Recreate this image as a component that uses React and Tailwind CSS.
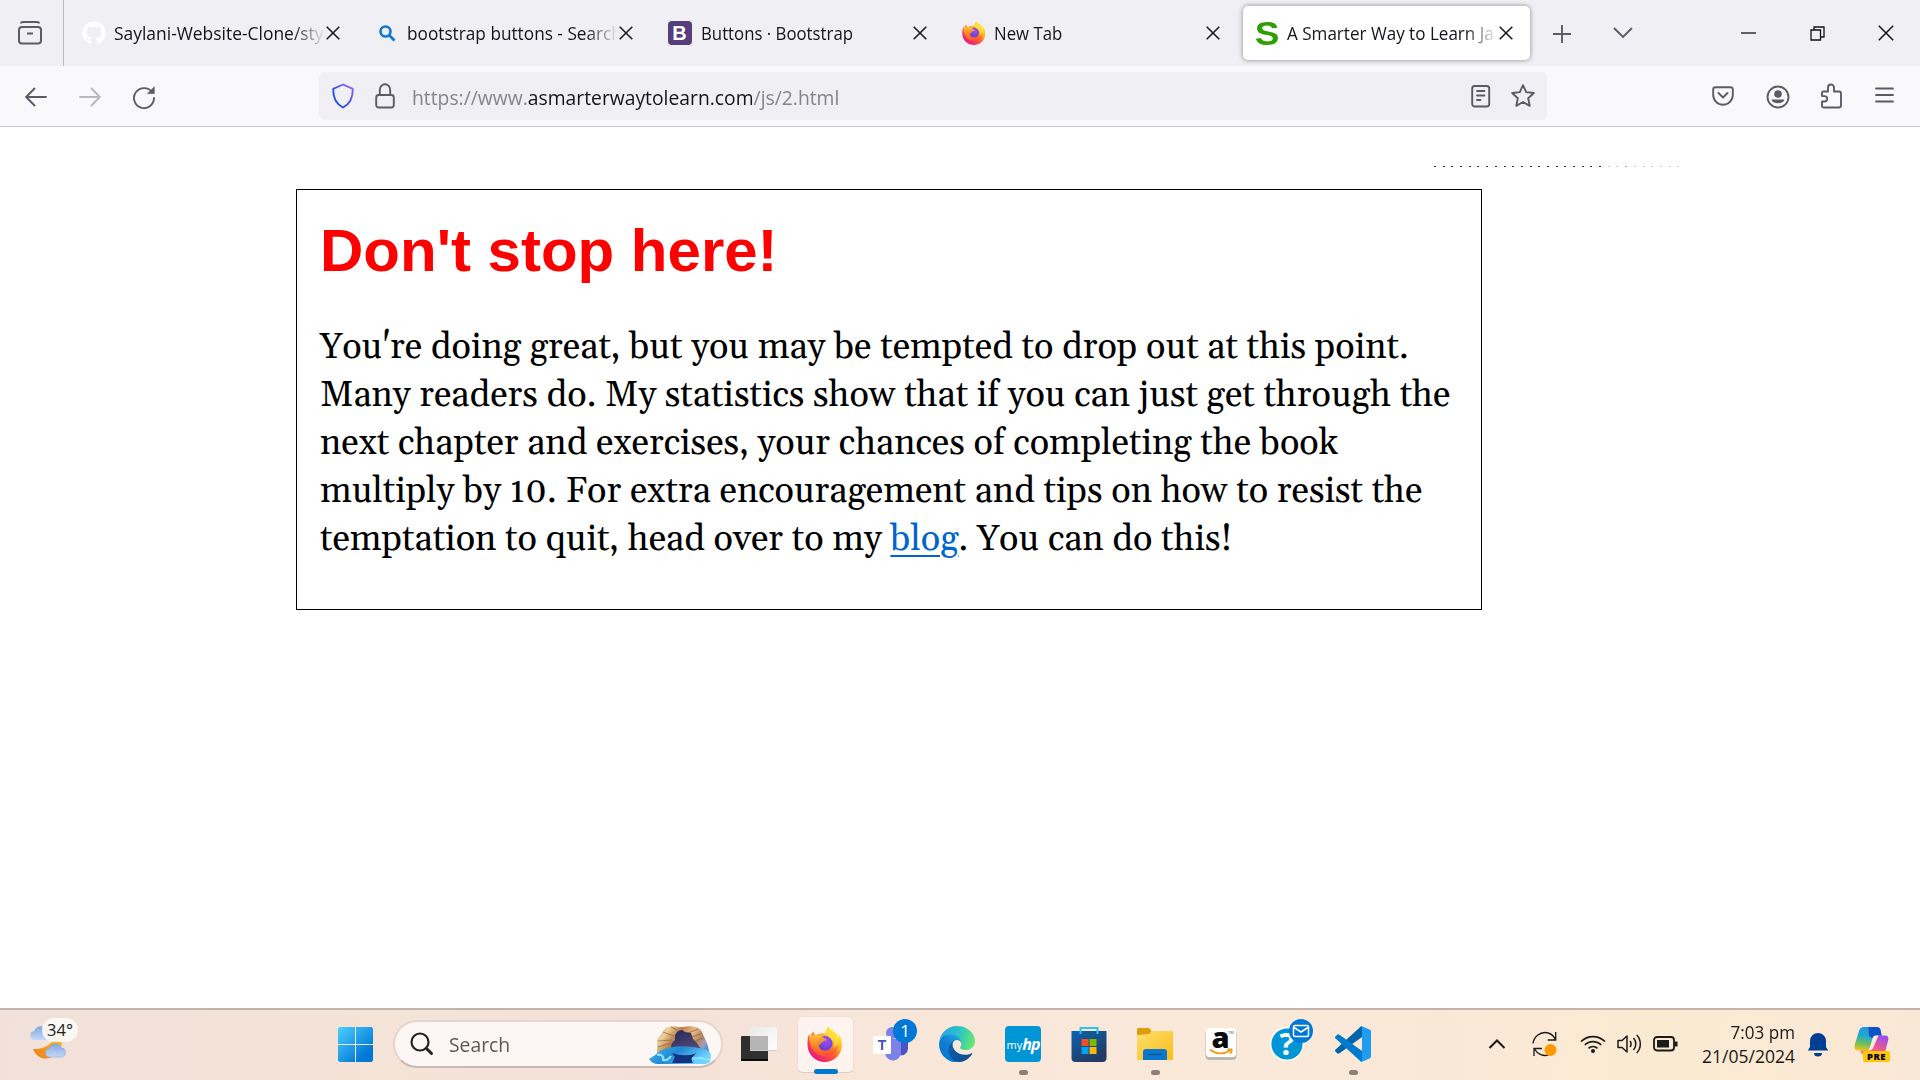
import { FaGithub } from "react-icons/fa";

function Firefox({ id, className }) {
  return (
    <svg viewBox="0 0 36 36" className={className}>
      <defs>
        <linearGradient id={id + "a"} x1="0.85" y1="0.1" x2="0.2" y2="0.95">
          <stop offset="0" stopColor="#fff44f" />
          <stop offset="0.3" stopColor="#ffbd2a" />
          <stop offset="0.6" stopColor="#ff5a36" />
          <stop offset="1" stopColor="#e5108a" />
        </linearGradient>
        <linearGradient id={id + "b"} x1="0.3" y1="0" x2="0.5" y2="1">
          <stop offset="0" stopColor="#ffc93c" />
          <stop offset="0.5" stopColor="#ff8a16" />
          <stop offset="1" stopColor="#ff4a3c" />
        </linearGradient>
        <radialGradient id={id + "c"} cx="0.6" cy="0.35" r="0.7">
          <stop offset="0" stopColor="#a04bf0" />
          <stop offset="1" stopColor="#5a3fd0" />
        </radialGradient>
      </defs>
      <path d="M21.5.5c-2 2-3 4.500-3 7C14 6.500 10 8 8.500 9.500 7.500 8.500 7 7 7 5.500 4.500 7 3.500 9 3 10.500 2.500 9.800 2.200 9 2.200 7.800.6 11.500.5 15 .5 19a17.200 17 0 0 0 34.500 0c0-5-1.500-9-4-11.500.3 1.300.5 2.500.3 4C29.500 5.500 23.500 5 21.500.5z" fill={`url(#${id}a)`} />
      <circle cx="18" cy="17.500" r="7.500" fill={`url(#${id}c)`} />
      <path d="M2 9.500c2.500-1 4.500-.5 6.500 0C12 8.200 15 9.500 17 12.200c2 .2 2.700.8 2.500 1.600-.3 1.200-3.500 1.700-4.200 2.200-.7 2-2.800 2-3.300 3.500.4 4.500 5 6 9 4.800 3.500-1 5.500-4 5.200-7.800-.3-3.500-2-5.500-3.700-6.700 4.500 1 8 5 8 9.700C30.500 26 25 30.500 18.500 30.500 9 30.500 2 22 2 9.500z" fill={`url(#${id}b)`} fillOpacity="0.85" />
      <path d="M21.500.5c-3 3.500-3.500 7.500.5 10.500 4.500 3 6 7 4.500 12 4-3 5.500-7.500 4.800-11.500C29.500 5.500 23.500 5 21.500.5z" fill="#ffe03d" fillOpacity="0.8" />
    </svg>
  );
}

function Edge() {
  return (
    <svg viewBox="0 0 256 256" className="h-9 w-9">
      <defs>
        <linearGradient id="e1" x1="0.2" y1="0.5" x2="1" y2="0.5"><stop offset="0" stopColor="#0c59a4" /><stop offset="1" stopColor="#114a8b" /></linearGradient>
        <linearGradient id="e2" x1="0.8" y1="0.2" x2="0.3" y2="0.9"><stop offset="0" stopColor="#1b9de2" /><stop offset="0.5" stopColor="#127cd0" /><stop offset="1" stopColor="#0078d7" /></linearGradient>
        <linearGradient id="e3" x1="0" y1="0.4" x2="1" y2="0.6"><stop offset="0" stopColor="#2b9fe6" /><stop offset="0.5" stopColor="#2cc3c8" /><stop offset="1" stopColor="#66eb6e" /></linearGradient>
      </defs>
      <path transform="translate(-4.63 -1.92)" fill="url(#e1)" d="M235.680 195.600a93.730 93.730 0 0 1-10.540 4.710 101.870 101.870 0 0 1-35.900 6.460c-47.320 0-88.540-32.550-88.540-74.320A31.480 31.480 0 0 1 117.130 105c-42.800 1.800-53.800 46.400-53.800 72.530 0 73.880 68.090 81.370 82.760 81.370 7.910 0 19.840-2.300 27-4.560l1.310-.44a128.340 128.340 0 0 0 66.600-52.800 4 4 0 0 0-5.320-5.500z" />
      <path transform="translate(-4.63 -1.92)" fill="url(#e2)" d="M110.340 246.340A79.200 79.200 0 0 1 87.600 225a80.720 80.720 0 0 1 29.530-120c3.120-1.470 8.450-4.130 15.540-4a32.350 32.350 0 0 1 25.690 13 31.880 31.880 0 0 1 6.360 18.660c0-.21 24.460-79.600-80-79.600-43.900 0-80 41.660-80 78.210a130.150 130.150 0 0 0 12.110 56 128 128 0 0 0 156.380 67.110 75.550 75.550 0 0 1-62.780-8z" />
      <path fill="url(#e3)" d="M152.330 148.860c-.81 1.050-3.300 2.500-3.300 5.660 0 2.610 1.700 5.120 4.720 7.230 14.380 10 41.490 8.680 41.560 8.680a59.560 59.560 0 0 0 30.270-8.350A61.380 61.380 0 0 0 256 109.200c.26-22.410-8-37.310-11.340-43.910C223.460 23.840 177.720 0 128 0A128 128 0 0 0 0 126.200c.48-36.540 36.800-66.050 80-66.050 3.500 0 23.460.34 42 10.070 16.340 8.580 24.900 18.940 30.850 29.210 6.180 10.670 7.280 24.150 7.280 29.520s-2.740 13.330-7.800 19.910z" />
    </svg>
  );
}

const Cross = ({ s = 14, w = 1.6, c = "#1d1d22" }) => (
  <svg width={s} height={s} viewBox="0 0 14 14" className="shrink-0">
    <path d="M.7.7l12.600 12.600M13.300.7L.7 13.300" stroke={c} strokeWidth={w} fill="none" />
  </svg>
);

const tabs = [
  { t: "Saylani-Website-Clone/sty", c: "scale-x-[0.968]", icon: <FaGithub className="h-6 w-6 text-white" /> },
  {
    t: "bootstrap buttons - Search", c: "scale-x-[0.957]",
    icon: <svg viewBox="0 0 24 24" className="h-6 w-6"><circle cx="10.500" cy="10.500" r="5" fill="none" stroke="#0f78d4" strokeWidth="2.600" /><path d="M14 14l5.500 5.500" stroke="#0f78d4" strokeWidth="2.800" /></svg>,
  },
  {
    t: "Buttons · Bootstrap", c: "scale-x-[0.932]",
    icon: <span className="mr-px -ml-px flex h-6 w-6 items-center justify-center rounded bg-[#563d7c] font-['Liberation_Sans'] text-[20px] leading-none font-bold text-white">B</span>,
  },
  { t: "New Tab", c: "scale-x-[0.932]", icon: <Firefox id="ft" className="h-6 w-6" /> },
  {
    t: "A Smarter Way to Learn Ja", c: "scale-x-[0.948]", active: true,
    icon: <span className="flex h-6 w-6 items-center justify-center font-['Liberation_Sans'] text-[33px] leading-none font-bold text-[#2f9e00]"><span className="scale-x-[1.12]">S</span></span>,
  },
];

function Tab({ tab }) {
  return (
    <div className={"flex h-[54px] w-[287px] shrink-0 items-center rounded-[5px] pl-3 " + (tab.active ? "bg-white shadow-[0_0_5px_rgba(0,0,0,0.45)]" : "")}>
      {tab.icon}
      <div className="ml-2 w-[212px] [mask-image:linear-gradient(to_right,black_178px,transparent_211px)]">
        <span className={"block w-max origin-left pb-px text-[18px] leading-6 whitespace-nowrap text-[#15141a] " + tab.c}>{tab.t}</span>
      </div>
      <Cross />
    </div>
  );
}

function TabStrip() {
  return (
    <div className="flex h-[66px] bg-[#f0eff4]">
      <div className="flex h-[66px] w-16 items-center justify-center border-r border-[#bcbbc3] pr-1">
        <svg width="26" height="26" viewBox="0 0 26 26" fill="none" stroke="#5b5b66" strokeWidth="2">
          <path d="M4 3.500c0-1 1-1.500 2-1.500h14c1 0 2 .5 2 1.500" />
          <rect x="2" y="7" width="22" height="16.500" rx="3" />
          <path d="M10 13.500h6" />
        </svg>
      </div>
      <div className="ml-1.5 flex items-center gap-[6.300px]">
        {tabs.map((t) => <Tab key={t.t} tab={t} />)}
      </div>
      <svg width="18" height="18" viewBox="0 0 18 18" className="mt-[25px] ml-[23px]" stroke="#5b5b66" strokeWidth="1.900"><path d="M9 0v18M0 9h18" /></svg>
      <svg width="20" height="12" viewBox="0 0 20 12" className="mt-[27px] ml-[42px]" fill="none" stroke="#5b5b66" strokeWidth="1.900"><path d="M1 1l9 9 9-9" /></svg>
      <div className="ml-auto flex h-[66px] items-center pr-[26px]">
        <svg width="15" height="2" className="mr-[54px]"><path d="M0 1h15" stroke="#111" strokeWidth="1.300" /></svg>
        <svg width="15" height="15" viewBox="0 0 15 15" className="mr-[53px]" fill="none" stroke="#111" strokeWidth="1.300"><path d="M1 4h9.500v10H1zM4 4V1h10v10h-3.500" /></svg>
        <Cross s={16} w={1.300} c="#111" />
      </div>
    </div>
  );
}

function Toolbar() {
  return (
    <div className="flex h-[61px] items-center border-b border-[#c9c8ce] bg-[#f9f9fb] text-[#5b5b66]">
      <div className="ml-[25px] flex w-[294px] items-center pt-px">
        <svg width="22" height="20" viewBox="0 0 22 20" fill="none" stroke="currentColor" strokeWidth="1.900" strokeLinecap="round"><path d="M21 10H1.500M9.500 1.500L1.200 10l8.300 8.500" /></svg>
        <svg width="22" height="20" viewBox="0 0 22 20" className="ml-8 text-[#b9b8bf]" fill="none" stroke="currentColor" strokeWidth="1.900" strokeLinecap="round"><path d="M1 10h19.500M12.500 1.500l8.300 8.500-8.300 8.500" /></svg>
        <svg width="24" height="24" viewBox="0 0 24 24" className="ml-[31px]" fill="none" stroke="currentColor" strokeWidth="1.900" strokeLinecap="round"><path d="M20.300 7.500A10 10 0 1 0 22 13" /><path d="M22.300 2v6.600h-6.600z" fill="currentColor" strokeWidth="0.600" strokeLinejoin="round" /></svg>
      </div>
      <div className="flex h-12 w-[1228px] items-center rounded-[5px] bg-[#f0eff4]">
        <svg width="24" height="26" viewBox="0 0 24 26" className="ml-3 shrink-0" fill="none" strokeWidth="1.900" strokeLinejoin="round">
          <defs><linearGradient id="sh" x1="0" y1="1" x2="1" y2="0"><stop offset="0.300" stopColor="#2450dc" /><stop offset="1" stopColor="#9a62ff" /></linearGradient></defs>
          <path d="M12 1.500l9.800 4.300C22 14 19 21 12 24.500 5 21 2 14 2.200 5.800z" stroke="url(#sh)" />
        </svg>
        <svg width="20" height="26" viewBox="0 0 20 26" className="ml-5 shrink-0" fill="none" stroke="currentColor" strokeWidth="1.900"><rect x="1.200" y="12" width="17.600" height="12.500" rx="2.500" /><path d="M4.800 12V7a5.200 5.700 0 0 1 10.400 0v5" /></svg>
        <div className="ml-[17px] w-[430px]">
          <span className="block w-max origin-left scale-x-[0.965] pt-[3px] text-[20px] leading-6 whitespace-nowrap text-[#85848b]">https://www.<span className="text-[#15141a]">asmarterwaytolearn.com</span>/js/2.html</span>
        </div>
        <svg width="20" height="24" viewBox="0 0 20 24" className="ml-auto" fill="none" stroke="currentColor" strokeWidth="1.900" strokeLinecap="round"><rect x="1.200" y="2" width="17" height="20.500" rx="2.500" /><path d="M6 7h7.500M6 11.500h7.500M6 16h3.500" /></svg>
        <svg width="26" height="26" viewBox="0 0 26 26" className="mr-[11px] ml-[19px]" fill="none" stroke="currentColor" strokeWidth="1.900" strokeLinejoin="round"><path d="M13 2.200l3.200 6.900 7.600.9-5.600 5.200 1.500 7.600L13 19l-6.700 3.800 1.500-7.600L2.200 10l7.600-.9z" /></svg>
      </div>
      <div className="ml-auto flex items-center pr-[26px]">
        <svg width="22" height="20" viewBox="0 0 22 20" fill="none" stroke="currentColor" strokeWidth="1.900" strokeLinecap="round" strokeLinejoin="round"><path d="M3.500 1.200h15A2.300 2.300 0 0 1 20.800 3.500V9A9.800 9.800 0 0 1 1.200 9V3.500A2.300 2.300 0 0 1 3.500 1.200zM6.500 7l4.500 4.500L15.500 7" /></svg>
        <svg width="24" height="24" viewBox="0 0 24 24" className="mt-0.5 ml-8" fill="none" stroke="currentColor" strokeWidth="1.900"><circle cx="12" cy="12" r="10.500" /><circle cx="12" cy="9" r="3.800" fill="currentColor" stroke="none" /><path d="M5.500 14.500h13a6.700 5 0 0 1-13 0z" fill="currentColor" stroke="none" /></svg>
        <svg width="23" height="26" viewBox="0 0 23 26" className="ml-[30px]" fill="none" stroke="currentColor" strokeWidth="1.900" strokeLinejoin="round"><path d="M3.500 8.500H8V4.500a3 3 0 0 1 6 0v4h5a2 2 0 0 1 2 2V22.500a2 2 0 0 1-2 2H3.500a1.500 1.500 0 0 1-1.500-1.500V18.500h2.500a2.700 2.700 0 0 0 0-5.400H2V10a1.500 1.500 0 0 1 1.500-1.500z" /></svg>
        <svg width="19" height="16" viewBox="0 0 19 16" className="mb-0.5 ml-8" fill="none" stroke="currentColor" strokeWidth="1.800" strokeLinecap="round"><path d="M1 1.500h17M1 8h17M1 14.500h17" /></svg>
      </div>
    </div>
  );
}

function Page() {
  return (
    <div className="flex h-[881px] flex-col bg-white">
      <div className="mt-[39px] ml-[1434px] flex h-0.5 gap-[6.700px]">
        {Array.from({ length: 29 }, (_, i) => (
          <span key={i} className={"h-px w-0.5 shrink-0 " + (i < 20 ? "bg-[#333]" : i === 22 ? "bg-[#9a98d8]" : "bg-[#ccc]")} />
        ))}
      </div>
      <div className="mt-[21px] ml-[296px] h-[421px] w-[1186px] border border-black pl-[23px]">
        <h1 className="mt-[26px] font-['Liberation_Sans'] text-[60px] leading-[70px] font-bold text-[#ff0000]">Don't stop here!</h1>
        <p className="mt-[38px] font-[Georgia,Gelasio,'Liberation_Serif',serif] text-[36px] leading-[48px] whitespace-nowrap text-black">
          You're doing great, but you may be tempted to drop out at this point.<br />
          Many readers do. My statistics show that if you can just get through the<br />
          next chapter and exercises, your chances of completing the book<br />
          multiply by <span className="[font-variant-numeric:oldstyle-nums]">10</span>. For extra encouragement and tips on how to resist the<br />
          temptation to quit, head over to my <a className="text-[#0066cc] underline decoration-2 underline-offset-[5px]">blog</a>. You can do this!
        </p>
      </div>
    </div>
  );
}

const Cell = ({ children, dot }) => (
  <div className="relative flex h-[70px] w-[66px] shrink-0 items-center justify-center pb-0.5">
    {children}
    {dot && <span className="absolute bottom-[5px] left-[29px] h-[5px] w-[9px] rounded-full bg-[#8b8079]" />}
  </div>
);

function Weather() {
  return (
    <div className="relative ml-[29px] h-[44px] w-[52px]">
      <svg width="52" height="44" viewBox="0 0 52 44">
        <defs>
          <linearGradient id="cl" x1="0" y1="0" x2="0" y2="1"><stop offset="0" stopColor="#82a5e8" /><stop offset="1" stopColor="#c5d9f7" /></linearGradient>
          <linearGradient id="mo" x1="1" y1="0" x2="0" y2="1"><stop offset="0" stopColor="#f8c93c" /><stop offset="1" stopColor="#ef7a14" /></linearGradient>
        </defs>
        <path d="M5 23a4.500 4.500 0 0 1 .2-8.900 7 7 0 0 1 13-1 5 5 0 0 1 3 9.900z" fill="url(#cl)" />
        <path d="M29 14c6 6 6 16-1 23-7 8-19 8-24-4 10 1 22-5 25-19z" transform="translate(0 -1)" fill="url(#mo)" />
        <path d="M20 41.500a4.300 4.300 0 0 1 .2-8.500 6.500 6.500 0 0 1 12-1 5 5 0 0 1 1.300 9.500z" transform="translate(0 -1.500)" fill="url(#cl)" stroke="#7c9fe0" strokeWidth="0.500" />
      </svg>
      <span className="absolute top-px left-[13px] flex h-6 w-9 items-center justify-center rounded-full bg-[#fbf8f6]/95 text-[16.500px] leading-none text-[#222]">34°</span>
    </div>
  );
}

function SearchArt() {
  return (
    <svg width="64" height="40" viewBox="0 0 64 40" className="mt-px">
      <defs>
        <linearGradient id="rk" x1="0" y1="0" x2="1" y2="0.500"><stop offset="0" stopColor="#d9a065" /><stop offset="0.200" stopColor="#edd0a0" /><stop offset="0.400" stopColor="#b98048" /><stop offset="0.600" stopColor="#e8bb80" /><stop offset="0.780" stopColor="#b58a68" /><stop offset="0.900" stopColor="#a39db5" /><stop offset="1" stopColor="#4f8fdc" /></linearGradient>
        <linearGradient id="wt" x1="0" y1="0" x2="1" y2="0.400"><stop offset="0" stopColor="#3dbdf5" /><stop offset="0.500" stopColor="#2387d4" /><stop offset="1" stopColor="#6fd3ff" /></linearGradient>
        <linearGradient id="cv" x1="0" y1="0" x2="0.600" y2="1"><stop offset="0" stopColor="#1f2760" /><stop offset="1" stopColor="#54476f" /></linearGradient>
      </defs>
      <path d="M9 28V16c0-2 1-3 2-4l5-7c1.500-2 3-3 6-3.500 4-.8 7 .5 11 .5 3 0 6-1.500 11-.5 4 .5 8 1.500 9.500 4.500l5 11c2 5 3.500 12 3.500 18l-4 3H12z" fill="url(#rk)" />
      <path d="M10 16l14-1M10 22l13-4M15 7l11 4M23 2l6 3M50 4l-10 4M54 8l-10 4M56 13l-9 3" stroke="#8b5a2e" strokeWidth="1.200" opacity="0.600" />
      <path d="M22 24l2-6 3-3v-5l3-4 4-1 3 2 6 1 2 6 3 3 2 3 4 5z" fill="url(#cv)" />
      <path d="M1 34c4-2 7-5 11-8 12-6 30-6 47-1l4 4-1 8-4 2H11c-5 0-8-2-10-5z" fill="url(#wt)" />
      <path d="M24 38l3-6-3-4c8 3 19 3 24 0-3 4-6 6-3 10z" fill="#14317f" />
      <path d="M9 30c4-1 7 1 6 5 4 1 6-1 8-4M44 33c3 2 7-1 10 0s4 3 8 1" fill="none" stroke="#8ce4ff" strokeWidth="2.200" />
    </svg>
  );
}

function Taskbar() {
  return (
    <div className="flex h-[72px] border-t-2 border-[#c2b3ac] bg-[linear-gradient(90deg,#f1e1da_0%,#f4e3d7_20%,#f3e1d9_33%,#f8e6da_45%,#fae9d9_62%,#fae8d7_75%,#fbead2_86%,#fae8d6_100%)]">
      <div className="flex w-[338px] items-start pt-[7px]"><Weather /></div>
      <svg width="36" height="36" viewBox="0 0 36 36" className="mt-[17px]">
        <defs><linearGradient id="wn" gradientUnits="userSpaceOnUse" x1="0" y1="0" x2="35" y2="35"><stop offset="0" stopColor="#4cd0ff" /><stop offset="0.500" stopColor="#1e9ae6" /><stop offset="0.800" stopColor="#0078d4" /></linearGradient></defs>
        <path d="M1.500 0H17v17H0V1.500zM18 0h15.500L35 1.500V17H18zM0 18h17v17H1.500L0 33.500zM18 18h17v15.500L33.500 35H18z" fill="url(#wn)" />
      </svg>
      <div className="mt-2.5 ml-[19px] flex h-12 w-[330px] shrink-0 items-center rounded-full border-2 border-[#e6d5cc] border-b-[#cbbab2] bg-[#fcf7f4] pr-[9px] pl-[15px]">
        <svg width="24" height="24" viewBox="0 0 24 24" fill="none" stroke="#24221f" strokeLinecap="round"><circle cx="10" cy="10" r="8.500" strokeWidth="2.200" /><path d="M16.500 16.500l5 5" strokeWidth="3" /></svg>
        <span className="ml-[15px] w-[66px] pt-px"><span className="block w-max origin-left scale-x-[0.965] text-[20px] leading-6 text-[#5e5955]">Search</span></span>
        <div className="ml-auto"><SearchArt /></div>
      </div>
      <div className="ml-[3px] flex">
        <Cell>
          <svg width="38" height="36" viewBox="0 0 38 36">
            <defs><linearGradient id="tv" x1="0" y1="0" x2="1" y2="1"><stop offset="0" stopColor="#e9e9e9" /><stop offset="1" stopColor="#fff" /></linearGradient></defs>
            <rect x="1" y="10" width="27" height="25" rx="1" fill="#2f2f2d" /><path d="M1 34h27" stroke="#0c0c0c" strokeWidth="2" />
            <rect x="10" y="1" width="27" height="24" rx="1" fill="url(#tv)" /><path d="M10 10h18v15H10z" fill="#b6b5b5" /><path d="M10 24.500h27" stroke="#ccc" />
          </svg>
        </Cell>
        <Cell>
          <div className="relative flex h-[57px] w-[57px] items-center justify-center rounded-md border border-[#efe0d6] border-b-[#dccdc4] bg-[#fdf4ef]">
            <Firefox id="fb" className="h-9 w-9" />
            <span className="absolute bottom-[-2px] left-[16px] h-[5px] w-6 rounded-full bg-[#0078d4]" />
          </div>
        </Cell>
        <Cell>
          <svg width="46" height="46" viewBox="0 0 46 46" className="mb-[5px] ml-[7px]">
            <circle cx="20" cy="14" r="6" fill="#7b83eb" /><path d="M27 20h9v10a7 7 0 0 1-9 6z" fill="#4e53c4" />
            <path d="M13 20h16v13a8 8 0 0 1-16 1z" fill="#7b83eb" /><rect x="1" y="17" width="18" height="18" rx="1" fill="#fff" />
            <text x="10" y="31" textAnchor="middle" fontFamily="Liberation Sans" fontWeight="700" fontSize="14" fill="#4b53bc">T</text>
            <circle cx="33" cy="12" r="12" fill="#0078d7" />
            <text x="33" y="18" textAnchor="middle" fontFamily="Open Sans" fontSize="17" fill="#fff">1</text>
          </svg>
        </Cell>
        <Cell><Edge /></Cell>
        <Cell dot>
          <div className="flex h-9 w-9 items-center justify-center rounded-sm bg-[#0096d6] font-['Open_Sans'] text-[11px] leading-none text-white">my<i className="text-[16px] font-bold tracking-[-1px]">hp</i></div>
        </Cell>
        <Cell>
          <svg width="36" height="36" viewBox="0 0 36 36">
            <defs><linearGradient id="st" x1="0" y1="0" x2="0.600" y2="1"><stop offset="0" stopColor="#0a63b0" /><stop offset="1" stopColor="#243a62" /></linearGradient></defs>
            <path d="M.5 5h35v27a4 4 0 0 1-4 4h-27a4 4 0 0 1-4-4z" fill="url(#st)" /><path d="M9.500 8V2h17v6" fill="none" stroke="#2fc0f5" strokeWidth="2" />
            <path d="M10.500 13h7v7h-7z" fill="#f25022" /><path d="M18.500 13h7v7h-7z" fill="#7fba00" /><path d="M10.500 21h7v7h-7z" fill="#00a4ef" /><path d="M18.500 21h7v7h-7z" fill="#ffb900" />
          </svg>
        </Cell>
        <Cell dot>
          <svg width="36" height="36" viewBox="0 0 36 36">
            <defs><linearGradient id="fo" x1="0" y1="0" x2="1" y2="1"><stop offset="0" stopColor="#ffde6e" /><stop offset="1" stopColor="#fcbd17" /></linearGradient></defs>
            <path d="M0 3.500A1.500 1.500 0 0 1 1.500 2H12l3 3.500-3 3.500H0z" fill="#dd9c08" /><path d="M12 8l3-3h20a1 1 0 0 1 1 1v28H0V9z" fill="url(#fo)" />
            <path d="M6 34V26a3 3 0 0 1 3-3h18a3 3 0 0 1 3 3v8z" fill="#0a76cc" /><path d="M11 28.500h14" stroke="#0b4f8d" strokeWidth="1.300" />
          </svg>
        </Cell>
        <Cell>
          <svg width="32" height="34" viewBox="0 0 32 34" className="mb-px">
            <rect x="0.500" y="3" width="31" height="30" rx="4" fill="#bdb8b4" /><rect x="1" y="1" width="30" height="29" rx="3.500" fill="#fff" />
            <text x="15.500" y="21" textAnchor="middle" fontFamily="Open Sans" fontWeight="800" fontSize="29" fill="#0a0a0a">a</text>
            <path d="M5 22.500c6 5 14 5 20 1M22.500 22.500h4c.3 1-.3 3-1.500 4" fill="none" stroke="#f79a14" strokeWidth="1.900" />
            <text x="23" y="7" fontFamily="Open Sans" fontSize="4" fill="#555">TM</text>
          </svg>
        </Cell>
        <Cell>
          <svg width="46" height="46" viewBox="0 0 46 46" className="mb-[5px] ml-[7px]">
            <circle cx="19" cy="25" r="17" fill="#fff" /><circle cx="19" cy="25" r="15.600" fill="#0096d6" />
            <text x="19" y="36" textAnchor="middle" fontFamily="Open Sans" fontWeight="700" fontSize="31" fill="#fff">?</text>
            <circle cx="33" cy="12" r="12" fill="#0078d7" /><rect x="25.500" y="6.500" width="15" height="11" rx="1.500" fill="none" stroke="#fff" strokeWidth="1.500" /><path d="M26 8.500l7 4.500 7-4.500" fill="none" stroke="#fff" strokeWidth="1.500" />
          </svg>
        </Cell>
        <Cell dot>
          <svg width="36" height="36" viewBox="0 0 36 36">
            <path d="M27 0v11L4.500 27.300a2 2 0 0 1-2.300-.1l-1.600-1.500a1.600 1.600 0 0 1 0-2.300L25.500.7z" fill="#0065a9" />
            <path d="M27 36V25L4.500 8.700a2 2 0 0 0-2.300.1L.6 10.300a1.600 1.600 0 0 0 0 2.300L25.500 35.300z" fill="#007acc" />
            <path d="M27 .2l8 3.600a1.800 1.800 0 0 1 1 1.700v25a1.800 1.800 0 0 1-1 1.700l-8 3.600c-1 .3-1.800-.3-1.800-.3l1.300-.5c.3-.3.5-.7.5-1.200V2.200c0-.6-.2-1-.5-1.300L25.200.4S26 0 27 .2z" fill="#1f9cf0" />
          </svg>
        </Cell>
      </div>
      <div className="ml-auto flex h-[70px] items-center pr-[30px] pb-0.5 text-[#1b1a19]">
        <svg width="18" height="10" viewBox="0 0 18 10" className="-ml-px" fill="none" stroke="currentColor" strokeWidth="2"><path d="M1.500 9L9 1.500 16.500 9" /></svg>
        <svg width="26" height="26" viewBox="0 0 26 26" className="mr-px ml-[26px]" fill="none" stroke="currentColor" strokeWidth="1.300"><path d="M1 12.500C2 5 8 1.500 13 1.500c5 0 8.500 3 10.500 7M23.700 1v8h-8M2 25v-7.500h8M2.500 18c3 5.500 9 7.500 14 6" /><circle cx="18.500" cy="19" r="6" fill="#ff9900" stroke="none" /></svg>
        <svg width="26" height="20" viewBox="0 0 26 20" className="ml-[21px]" fill="none" stroke="currentColor" strokeWidth="1.700"><path d="M1 7.500a17 17 0 0 1 24 0M4.800 11a11.600 11.600 0 0 1 16.400 0M8.500 14.300a6.500 6.500 0 0 1 9 0" /><circle cx="13" cy="17" r="2" fill="currentColor" stroke="none" /></svg>
        <svg width="25" height="22" viewBox="0 0 25 22" className="ml-[11px]" fill="none" stroke="currentColor" strokeWidth="1.500" strokeLinejoin="round"><path d="M1 7.500h4L10 3v16l-5-4.500H1zM13 8a5 5 0 0 1 0 6M16.500 5a9 9 0 0 1 0 12M19.700 2a13 13 0 0 1 0 18" /></svg>
        <svg width="25" height="16" viewBox="0 0 25 16" className="ml-[11px]" fill="none" stroke="currentColor" strokeWidth="1.800"><rect x="1" y="1" width="20" height="13.500" rx="3" /><rect x="4" y="4" width="12" height="7.500" fill="currentColor" stroke="none" /><path d="M23 5.500v5" strokeWidth="3" /></svg>
        <div className="ml-[21px] w-[96px] text-right text-[17.500px] leading-6">
          <div className="origin-right scale-x-[0.975]">7:03 pm</div>
          <div className="origin-right">21/05/2024</div>
        </div>
        <svg width="22" height="24" viewBox="0 0 22 24" className="mt-px ml-[12px]" fill="#003e92"><path d="M11 0a8 8 0 0 0-8 8v6L.8 17.500h20.400L19 14V8a8 8 0 0 0-8-8zM7 20h8a4 3.500 0 0 1-8 0z" /></svg>
        <div className="relative ml-[25px] h-[36px] w-[36px]">
          <svg width="36" height="32" viewBox="0 0 36 32">
            <defs>
              <linearGradient id="c1" x1="0.400" y1="0" x2="0.200" y2="1"><stop offset="0" stopColor="#1798e8" /><stop offset="0.400" stopColor="#27a9c8" /><stop offset="0.700" stopColor="#6fbf58" /><stop offset="1" stopColor="#f0c21c" /></linearGradient>
              <linearGradient id="c2" x1="0.800" y1="0" x2="0.200" y2="1"><stop offset="0" stopColor="#9a4cf0" /><stop offset="0.500" stopColor="#e0569e" /><stop offset="1" stopColor="#ff7a50" /></linearGradient>
            </defs>
            <path d="M22 9.500h9c3 0 4 2 3 5.500l-3.500 13H8c-1-1-1.500-2-2-3.500h4c3 0 4.500-1.500 5.500-5z" fill="url(#c2)" />
            <path d="M10 1h12c3 0 4 1 4.500 3l1 5.500h-5L19 12c-2 5-2 12-6.500 12.500H4C1 24.500 0 22.500.7 19L5 5c1-3 2.500-4 5-4z" fill="url(#c1)" />
            <path d="M14.500 1h7.500c3 0 4 1 4.500 3l1.200 5.500h-4c-3 0-3.500.5-5 3L15 10z" fill="#0c45c4" opacity="0.850" />
            <path d="M22 9.500h2.500L19.500 21c-.8 2-1.500 3-3.500 3.500h-3c2-1 2.500-2 3.300-4.500l2.200-7.500c.5-2 1.500-3 3.500-3z" fill="#fbe8e0" />
          </svg>
          <span className="absolute top-[25px] left-[9px] flex h-[11px] w-[27px] items-center justify-center rounded-[2px] bg-[#ffc60a] text-[9.500px] leading-none font-extrabold tracking-[0.500px] text-black">PRE</span>
        </div>
      </div>
    </div>
  );
}

export default function App() {
  return (
    <div className="h-[1080px] w-[1920px] overflow-hidden font-['Open_Sans','Noto_Sans',sans-serif]">
      <TabStrip />
      <Toolbar />
      <Page />
      <Taskbar />
    </div>
  );
}
